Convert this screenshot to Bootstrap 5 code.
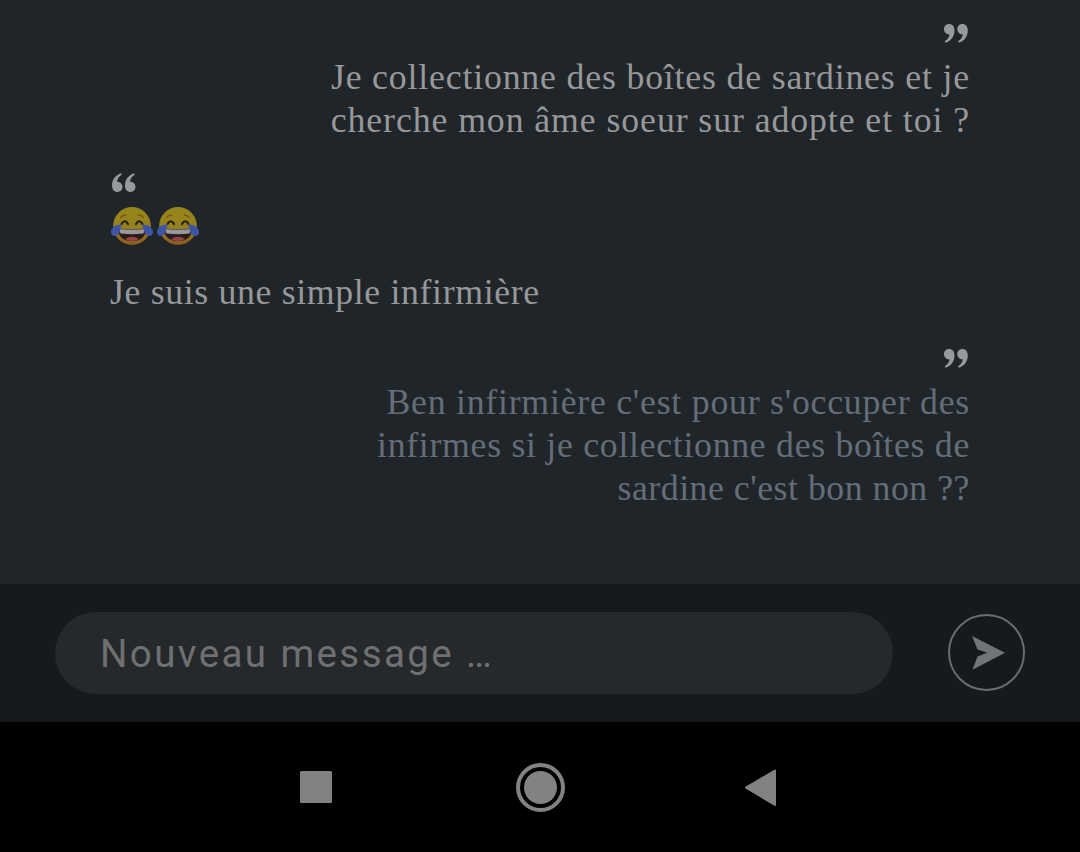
<!DOCTYPE html>
<html lang="fr">
<head>
<meta charset="utf-8">
<meta name="viewport" content="width=device-width, initial-scale=1">
<title>Messages</title>
<link href="https://cdn.jsdelivr.net/npm/bootstrap@5.3.0/dist/css/bootstrap.min.css" rel="stylesheet">
<style>
body{background:#202529;color:#97989a;height:852px;overflow:hidden}
.thread{height:584px;padding:24px 110px 0;font:35.75px/43px "Liberation Serif",serif;letter-spacing:.83px;background:#202529}
.quote-mark{height:32px;padding:0 2px;color:#98999b}
.quote-mark svg{display:block}
.pending{color:#646d78}
.ls-wide{letter-spacing:.92px}
.ls-snug{letter-spacing:.76px}
.ls-tight{letter-spacing:.65px}
.ls-close{letter-spacing:.71px}
.ls-tighter{letter-spacing:.52px}
.after-sent{margin-top:31px}
.after-received{margin-top:35px}
.faces{height:43px;gap:3px;padding-top:1px}
.next-line{padding-top:23px}
.composer{height:138px;background:#161a1d;padding:0 55px}
.composer .form-control{width:838px;height:82px;background:#25292c;color:#727476;font:38.5px/46px Roboto,sans-serif;letter-spacing:2.4px;padding:0 45px}
.composer .form-control::placeholder{color:#6e7072;opacity:1}
.send{width:78px;height:78px}
.sysnav{height:130px;background:#000;color:#828282}
</style>
</head>
<body class="d-flex flex-column">
<svg class="position-absolute" width="0" height="0" xmlns="http://www.w3.org/2000/svg">
  <defs><linearGradient id="skin" x2="0" y2="1"><stop offset="0" stop-color="#988719"/><stop offset=".55" stop-color="#948020"/><stop offset="1" stop-color="#8c5a20"/></linearGradient>
  <path id="drop" d="M4.900 0C8.500 0 10.500 2.700 10.500 6.500 10.500 12.500 7 16.900 1.500 18.800L.700 17.300C4 15.500 5.200 13 5.400 10.300 2.400 10.500 0 8 0 5.200 0 2.100 2.100 0 4.900 0z"/></defs>
  <symbol id="joy" viewBox="0 0 43 39">
    <circle cx="22" cy="20" r="18.900" fill="url(#skin)"/>
    <path d="M10.500 11.500q2-2 5-2.500M28.500 9q3 .5 5 2.500" fill="none" stroke="#7c5516" stroke-width="1.300" stroke-linecap="round"/>
    <path d="M11.500 18q3.300-5.500 6.500 0M26 18q3.300-5.500 6.500 0" fill="none" stroke="#251e17" stroke-width="2.200" stroke-linecap="round"/>
    <path d="M7.500 22.500Q22 23.500 36.500 22.500 35 35 22 35T7.500 22.500z" fill="#271b1c"/>
    <path d="M9 23Q22 24 35 23L33.500 27.500Q22 29 10.500 27.500z" fill="#99979a"/>
    <path d="M15 33Q22 28.500 29 33 26 35 22 35T15 33z" fill="#93434c"/>
    <path d="M11.500 18.500C6.500 18 1 21 1 26c0 5.500 8 5 8.700-.5zM32 18.500C37.500 18 43 21 43 26c0 5.500-8 5-8.700-.5z" fill="#3d55a2"/>
  </symbol>
  <symbol id="quote" viewBox="0 0 24 19"><use href="#drop"/><use href="#drop" x="13.300"/></symbol>
  <symbol id="quote-open" viewBox="0 0 24 19"><g transform="rotate(180 12 9.500)"><use href="#drop" x=".5"/><use href="#drop" x="13.500"/></g></symbol>
</svg>
<main class="thread flex-shrink-0">
  <div class="text-end">
    <div class="quote-mark d-flex justify-content-end"><svg width="24" height="19" fill="currentColor" role="img" aria-label="”"><use href="#quote"/></svg></div>
    <p class="mb-0">Je collectionne des boîtes de sardines et je<br><span class="ls-wide">cherche mon âme soeur sur adopte et toi ?</span></p>
  </div>
  <div class="after-sent">
    <div class="quote-mark"><svg width="24" height="19" fill="currentColor" role="img" aria-label="“"><use href="#quote-open"/></svg></div>
    <div class="faces d-flex" role="img" aria-label="😂😂">
      <svg width="43" height="39" aria-hidden="true"><use href="#joy"/></svg><svg width="43" height="39" aria-hidden="true"><use href="#joy"/></svg>
    </div>
    <p class="mb-0 next-line"><span class="ls-tight">Je suis une simple infirmière</span></p>
  </div>
  <div class="text-end after-received">
    <div class="quote-mark d-flex justify-content-end"><svg width="24" height="19" fill="currentColor" role="img" aria-label="”"><use href="#quote"/></svg></div>
    <p class="mb-0 pending"><span class="ls-snug">Ben infirmière c'est pour s'occuper des</span><br><span class="ls-close">infirmes si je collectionne des boîtes de</span><br><span class="ls-tighter">sardine c'est bon non ??</span></p>
  </div>
</main>
<form class="composer d-flex align-items-center justify-content-between flex-shrink-0">
  <input class="form-control rounded-pill border-0" type="text" placeholder="Nouveau message …" aria-label="Nouveau message">
  <button class="btn p-0 border-0 send d-flex" type="button" aria-label="Envoyer">
    <svg width="78" height="78" viewBox="0 0 78 78"><circle cx="39.500" cy="38.500" r="37.500" fill="none" stroke="#696c6e" stroke-width="2"/><path d="M25 22 58 38.700 25.500 55.700 30.500 42.500Q34 41.300 40 38.700 34 36.500 30.500 35.500z" fill="#727577"/></svg>
  </button>
</form>
<nav class="sysnav d-flex justify-content-center align-items-center flex-shrink-0" aria-label="Système">
  <svg width="480" height="50" viewBox="300 762 480 50" fill="currentColor">
    <rect x="300" y="771" width="32" height="32" rx="1.500"/>
    <circle cx="540.500" cy="787.500" r="22.500" fill="none" stroke="currentColor" stroke-width="4"/>
    <circle cx="540.500" cy="787.500" r="16.500"/>
    <path d="M746 787.700 775 770.500V805z" stroke="currentColor" stroke-width="2" stroke-linejoin="round"/>
  </svg>
</nav>
<script src="https://cdn.jsdelivr.net/npm/bootstrap@5.3.0/dist/js/bootstrap.bundle.min.js"></script>
</body>
</html>
